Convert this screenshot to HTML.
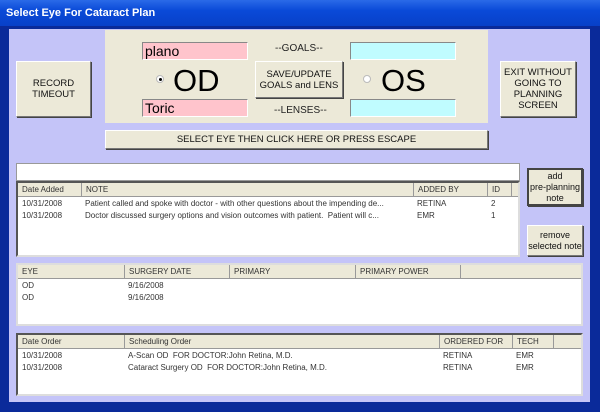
<!DOCTYPE html><html><head><style>
*{margin:0;padding:0;box-sizing:border-box}
body{width:600px;height:412px;overflow:hidden;background:#0a2a9a;font-family:"Liberation Sans",sans-serif;position:relative}
div{position:absolute}
.title{left:0;top:0;width:600px;height:26px;background:linear-gradient(#2a6ae8,#0a4ad8 40%,#0840c8);color:#fff;font-weight:bold;font-size:11px;padding:7px 0 0 6px}
.client{left:9px;top:29px;width:581px;height:373px;background:#c4c4f8}
.panel{background:#ece9d8}
.btn{background:#ece9d8;border:1px solid;border-color:#fff #777 #777 #fff;box-shadow:1px 1px 0 #444;font-size:9.5px;text-align:center;display:flex;align-items:center;justify-content:center;line-height:11px;color:#111}
.pink{background:#ffc4cc;border:1px solid;border-color:#888 #fff #fff #888;font-size:14px;padding-left:2px;line-height:16px}
.cyan{background:#c0fcff;border:1px solid;border-color:#888 #fff #fff #888}
.lbl{font-size:10px;color:#222}
.grid{background:#fff;border:2px solid #555;border-right-color:#ddd;border-bottom-color:#ddd;font-size:8px;color:#333}
.hdr{position:absolute;left:0;top:0;right:0;height:14px;background:#ece9d8;border-bottom:1px solid #999}
.hdr span,.row span{position:absolute;top:1px;white-space:nowrap}
.hdr span{border-left:1px solid #999;height:14px;top:0;padding:2px 0 0 4px}
.row{position:absolute;left:0;right:0;height:12px}
.radio{width:8px;height:8px;border-radius:50%;background:#fff;border:1px solid #bbb}
</style></head><body>
<div class="title">Select Eye For Cataract Plan</div>
<div class="client"></div>
<div class="panel" style="left:105px;top:30px;width:383px;height:93px"></div>
<div class="pink" style="left:142px;top:42px;width:106px;height:18px">plano</div>
<div class="pink" style="left:142px;top:99px;width:106px;height:18px">Toric</div>
<div class="cyan" style="left:350px;top:42px;width:106px;height:18px"></div>
<div class="cyan" style="left:350px;top:99px;width:106px;height:18px"></div>
<div class="lbl" style="left:275px;top:43px">--GOALS--</div>
<div class="lbl" style="left:274px;top:105px">--LENSES--</div>
<div class="radio" style="left:156px;top:75px"><div style="left:2px;top:2px;width:3px;height:3px;background:#000;border-radius:50%"></div></div>
<div style="left:173px;top:63px;font-size:31px">OD</div>
<div class="radio" style="left:363px;top:75px"></div>
<div style="left:381px;top:63px;font-size:31px">OS</div>
<div class="btn" style="left:255px;top:61px;width:88px;height:37px">SAVE/UPDATE<br>GOALS and LENS</div>
<div class="btn" style="left:16px;top:61px;width:75px;height:56px">RECORD<br>TIMEOUT</div>
<div class="btn" style="left:500px;top:61px;width:76px;height:56px">EXIT WITHOUT<br>GOING TO<br>PLANNING<br>SCREEN</div>
<div class="btn" style="left:105px;top:130px;width:383px;height:19px">SELECT EYE THEN CLICK HERE OR PRESS ESCAPE</div>
<div style="left:16px;top:163px;width:504px;height:18px;background:#fff;border:1px solid #999"></div>
<div class="grid" style="left:16px;top:181px;width:504px;height:76px">
<div class="hdr"><span style="left:0;border:0">Date Added</span><span style="left:63px">NOTE</span><span style="left:395px">ADDED BY</span><span style="left:469px">ID</span><span style="left:493px"></span></div>
<div class="row" style="top:15px"><span style="left:4px">10/31/2008</span><span style="left:67px">Patient called and spoke with doctor - with other questions about the impending de...</span><span style="left:399px">RETINA</span><span style="left:473px">2</span></div>
<div class="row" style="top:27px"><span style="left:4px">10/31/2008</span><span style="left:67px">Doctor discussed surgery options and vision outcomes with patient.&nbsp; Patient will c...</span><span style="left:399px">EMR</span><span style="left:473px">1</span></div>
</div>
<div class="btn" style="left:527px;top:168px;width:56px;height:38px;font-size:9px;border:2px solid #444">add<br>pre-planning<br>note</div>
<div class="btn" style="left:527px;top:225px;width:56px;height:31px;font-size:9px">remove<br>selected note</div>
<div class="grid" style="left:16px;top:263px;width:567px;height:63px;border-color:#ddd">
<div class="hdr"><span style="left:0;border:0">EYE</span><span style="left:106px">SURGERY DATE</span><span style="left:211px">PRIMARY</span><span style="left:337px">PRIMARY POWER</span><span style="left:442px"></span></div>
<div class="row" style="top:15px"><span style="left:4px">OD</span><span style="left:110px">9/16/2008</span></div>
<div class="row" style="top:27px"><span style="left:4px">OD</span><span style="left:110px">9/16/2008</span></div>
</div>
<div class="grid" style="left:16px;top:333px;width:567px;height:63px">
<div class="hdr"><span style="left:0;border:0">Date Order</span><span style="left:106px">Scheduling Order</span><span style="left:421px">ORDERED FOR</span><span style="left:494px">TECH</span><span style="left:535px"></span></div>
<div class="row" style="top:15px"><span style="left:4px">10/31/2008</span><span style="left:110px">A-Scan OD&nbsp; FOR DOCTOR:John Retina, M.D.</span><span style="left:425px">RETINA</span><span style="left:498px">EMR</span></div>
<div class="row" style="top:27px"><span style="left:4px">10/31/2008</span><span style="left:110px">Cataract Surgery OD&nbsp; FOR DOCTOR:John Retina, M.D.</span><span style="left:425px">RETINA</span><span style="left:498px">EMR</span></div>
</div>
</body></html>
